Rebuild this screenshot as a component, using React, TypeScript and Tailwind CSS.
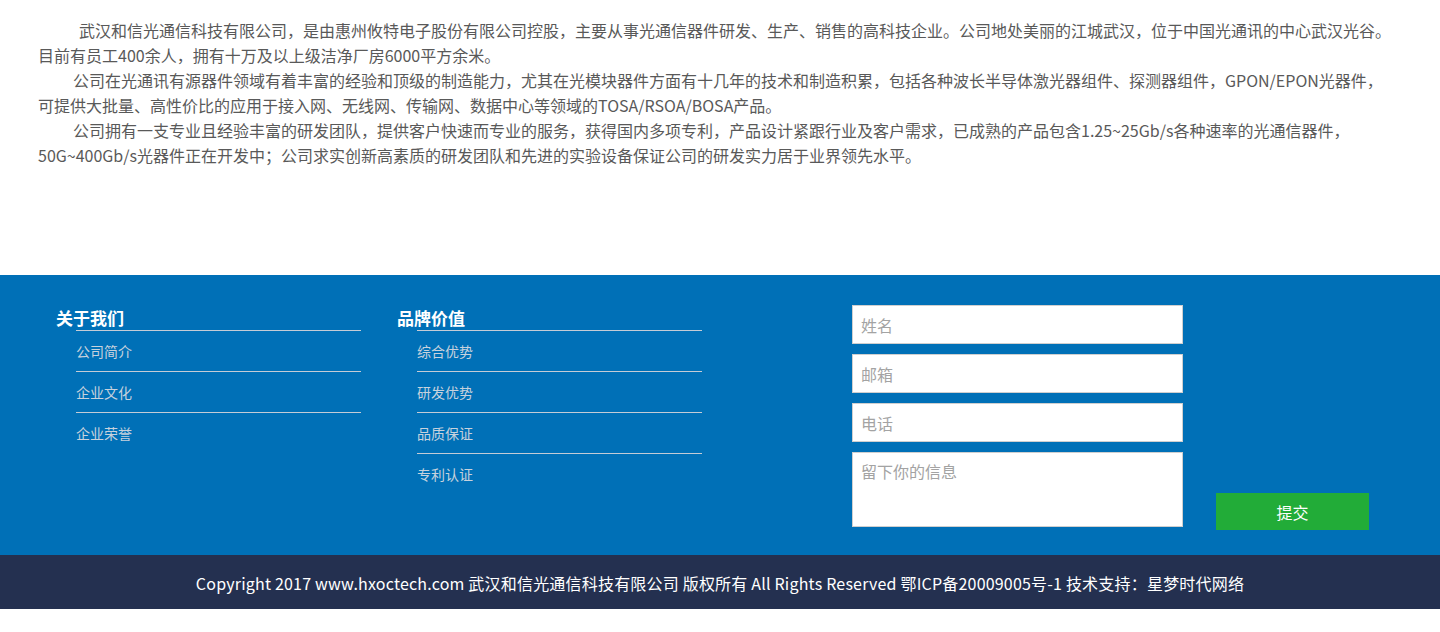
import React from "react"

// ============================================
// Data
// ============================================

const introLines: { text: string; indent: "first" | "para" | "none" }[] = [
  {
    text: "武汉和信光通信科技有限公司，是由惠州攸特电子股份有限公司控股，主要从事光通信器件研发、生产、销售的高科技企业。公司地处美丽的江城武汉，位于中国光通讯的中心武汉光谷。",
    indent: "first",
  },
  { text: "目前有员工400余人，拥有十万及以上级洁净厂房6000平方余米。", indent: "none" },
  {
    text: "公司在光通讯有源器件领域有着丰富的经验和顶级的制造能力，尤其在光模块器件方面有十几年的技术和制造积累，包括各种波长半导体激光器组件、探测器组件，GPON/EPON光器件，",
    indent: "para",
  },
  {
    text: "可提供大批量、高性价比的应用于接入网、无线网、传输网、数据中心等领域的TOSA/RSOA/BOSA产品。",
    indent: "none",
  },
  {
    text: "公司拥有一支专业且经验丰富的研发团队，提供客户快速而专业的服务，获得国内多项专利，产品设计紧跟行业及客户需求，已成熟的产品包含1.25~25Gb/s各种速率的光通信器件，",
    indent: "para",
  },
  {
    text: "50G~400Gb/s光器件正在开发中；公司求实创新高素质的研发团队和先进的实验设备保证公司的研发实力居于业界领先水平。",
    indent: "none",
  },
]

const columns = [
  { title: "关于我们", items: ["公司简介", "企业文化", "企业荣誉"], width: "w-[341px]" },
  { title: "品牌价值", items: ["综合优势", "研发优势", "品质保证", "专利认证"], width: "w-[455px]" },
]

const fontStack = "font-['Microsoft_YaHei','Noto_Sans_CJK_SC',sans-serif]"

// ============================================
// Sub-components
// ============================================

function FooterColumn({ title, items, width }: { title: string; items: string[]; width: string }) {
  return (
    <div className={width}>
      <h3 className="h-[25px] text-[17px] font-bold leading-[25px] text-white">{title}</h3>
      <ul className="ml-[20px] w-[285px]">
        {items.map((item) => (
          <li
            key={item}
            className="h-[41px] border-t border-[#c5ccd6] text-[14px] leading-[40px] text-[#c7d2dd]"
          >
            {item}
          </li>
        ))}
      </ul>
    </div>
  )
}

function ContactForm() {
  const inputCls =
    "block h-[39px] w-[331px] border border-[#cfcfcf] bg-white px-[8px] text-[16px] text-[#333] outline-none placeholder:text-[#a3a3a3]"
  return (
    <div className="flex">
      <form className="flex w-[331px] flex-col gap-[10px]" onSubmit={(e) => e.preventDefault()}>
        <input className={inputCls} placeholder="姓名" />
        <input className={inputCls} placeholder="邮箱" />
        <input className={inputCls} placeholder="电话" />
        <textarea
          className="block h-[75px] w-[331px] resize-none border border-[#cfcfcf] bg-white px-[8px] pt-[6px] text-[16px] text-[#333] outline-none placeholder:text-[#a3a3a3]"
          placeholder="留下你的信息"
        />
      </form>
      <button
        type="button"
        className="ml-[33px] mt-[188px] h-[37px] w-[153px] bg-[#22ac38] text-[16px] text-white"
      >
        提交
      </button>
    </div>
  )
}

// ============================================
// Main Component
// ============================================

export default function App() {
  return (
    <div className={`w-[1440px] bg-white ${fontStack}`}>
      {/* Intro */}
      <section className="h-[275px] px-[38px] pt-[18px] text-[16px] leading-[25px] text-[#595959]">
        {introLines.map((line, i) => (
          <p
            key={i}
            className={
              line.indent === "first"
                ? "whitespace-nowrap pl-[41px]"
                : line.indent === "para"
                  ? "whitespace-nowrap pl-[35px]"
                  : "whitespace-nowrap"
            }
          >
            {line.text}
          </p>
        ))}
      </section>

      {/* Footer */}
      <footer className="flex h-[280px] bg-[#0070b7] pl-[56px] pt-[30px]">
        {columns.map((col) => (
          <FooterColumn key={col.title} {...col} />
        ))}
        <ContactForm />
      </footer>

      {/* Copyright */}
      <div className="flex h-[54px] items-center justify-center bg-[#243050] pt-[2px] text-[16px] tracking-[0.2px] text-white">
        Copyright 2017 www.hxoctech.com 武汉和信光通信科技有限公司 版权所有 All Rights Reserved
        鄂ICP备20009005号-1 技术支持：星梦时代网络
      </div>
    </div>
  )
}
